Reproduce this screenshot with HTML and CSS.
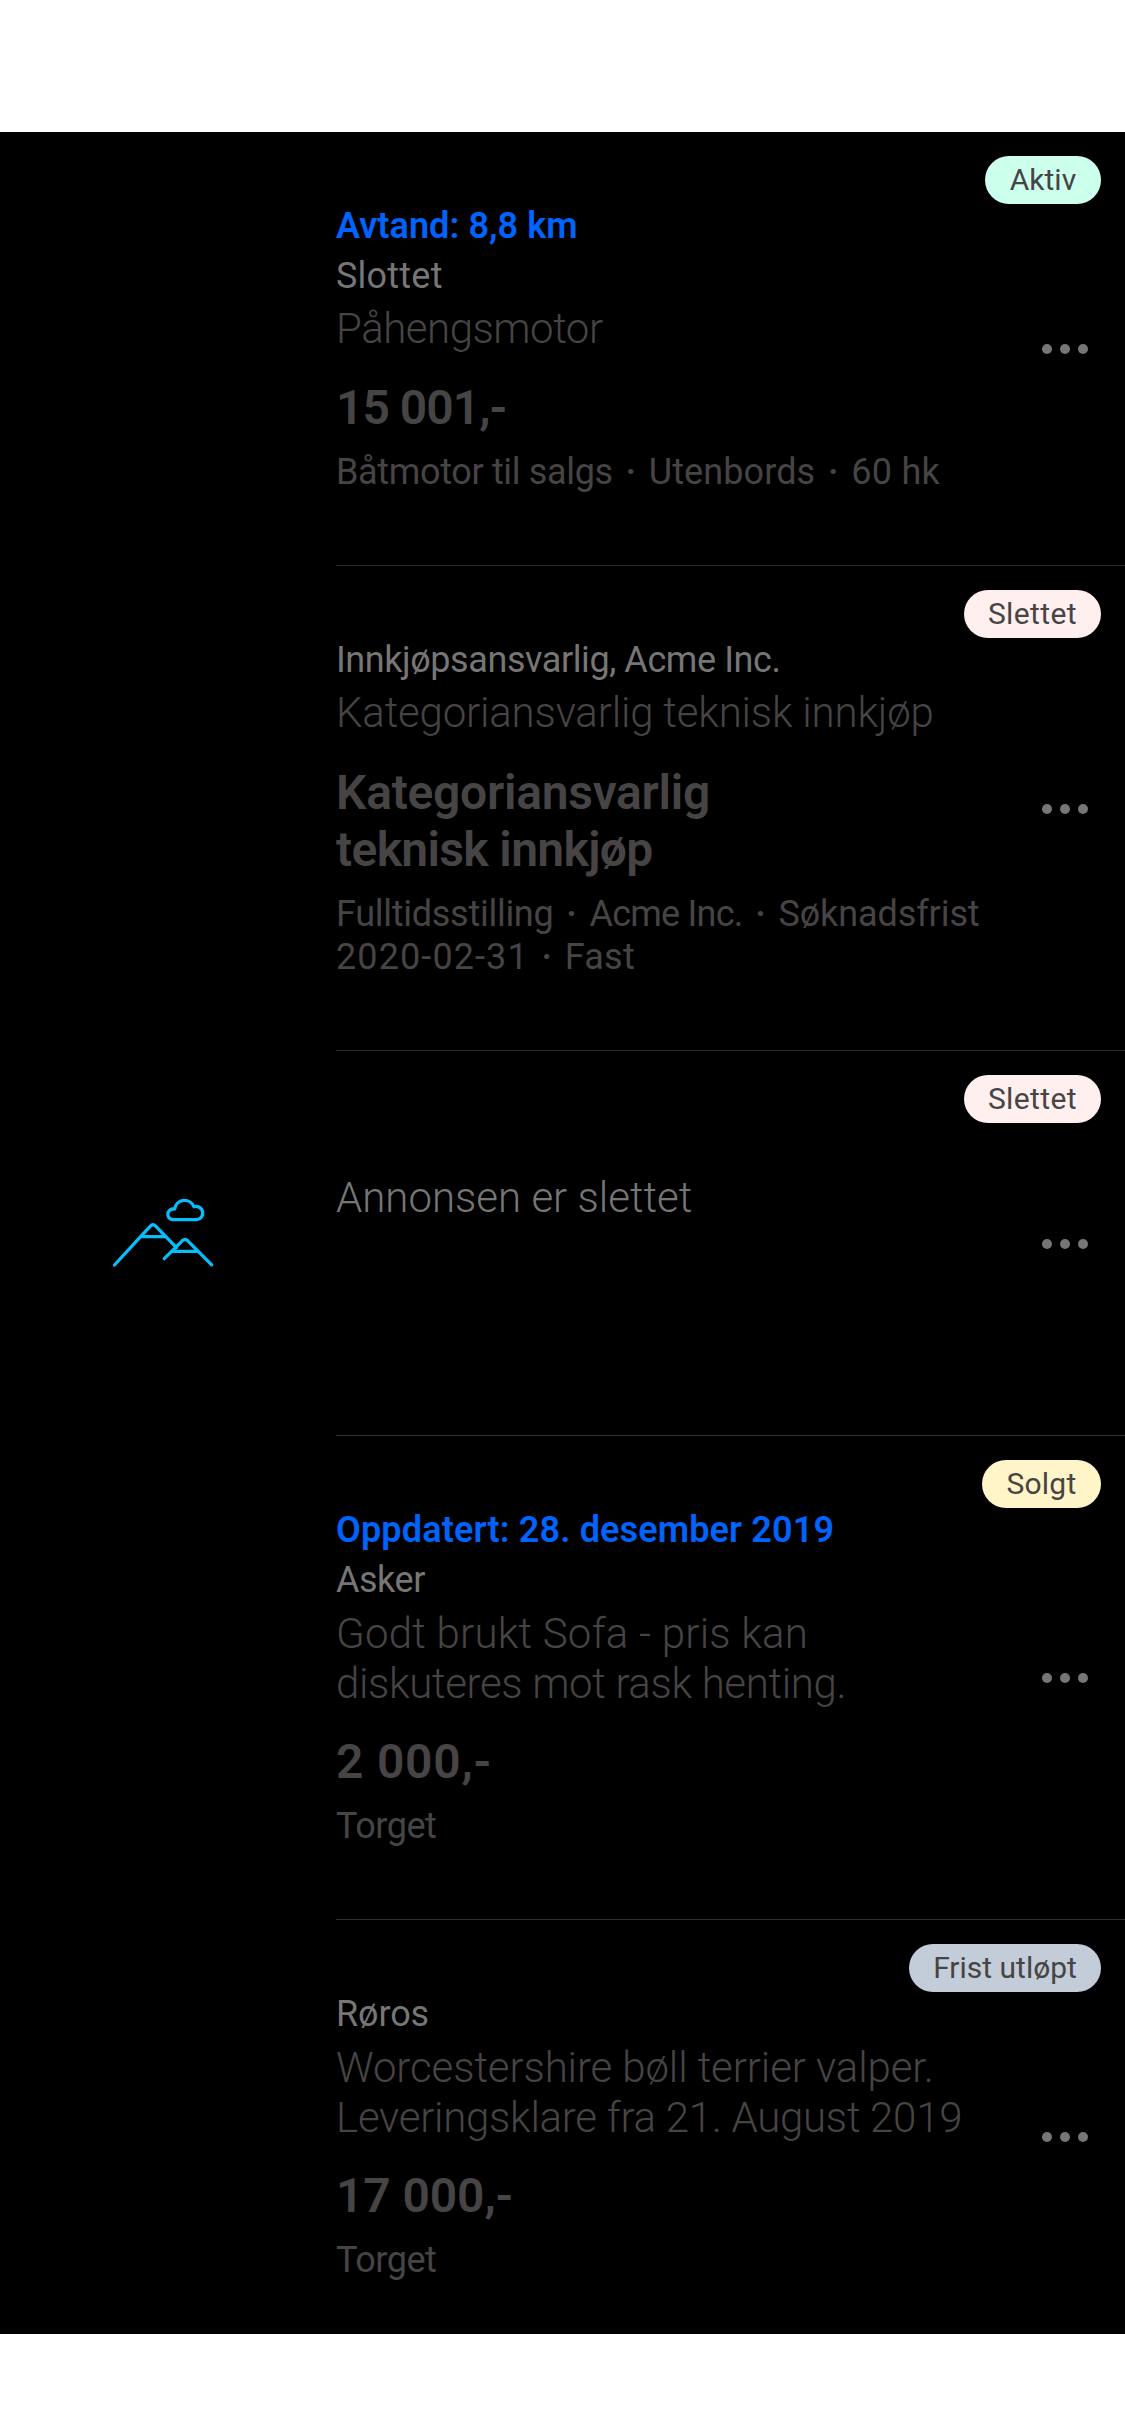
FILE: index.html
```
<!DOCTYPE html>
<html lang="nb">
<head>
<meta charset="utf-8">
<title>Favoritter</title>
<link rel="stylesheet" href="styles.css">
</head>
<body>
<svg class="sprite" width="0" height="0" aria-hidden="true">
  <symbol id="more" viewBox="0 0 48 12">
    <circle cx="6" cy="6" r="5"/><circle cx="24" cy="6" r="5"/><circle cx="42" cy="6" r="5"/>
  </symbol>
</svg>
<main class="list">
  <article class="item item--distance">
    <div class="media"></div>
    <div class="content">
      <div class="texts">
        <p class="status track-p05">Avtand: 8,8 km</p>
        <p class="place track-p20">Slottet</p>
        <h2 class="title track-n45">Påhengsmotor</h2>
        <p class="price track-n97">15 001,-</p>
        <p class="detail"><span class="track-n34">Båtmotor til salgs</span><span class="dot">·</span><span class="track-p10">Utenbords</span><span class="dot">·</span><span class="track-p20">60 hk</span></p>
      </div>
      <svg class="more"><use href="#more"/></svg>
      <span class="badge badge--active">Aktiv</span>
    </div>
  </article>

  <article class="item item--job">
    <div class="media"></div>
    <div class="content">
      <div class="texts">
        <p class="place track-n40">Innkjøpsansvarlig, Acme Inc.</p>
        <h2 class="title track-n18">Kategoriansvarlig teknisk innkjøp</h2>
        <p class="price"><span class="track-n27">Kategoriansvarlig</span><br><span class="track-n60">teknisk innkjøp</span></p>
        <p class="detail"><span class="track-n27">Fulltidsstilling</span><span class="dot">·</span><span class="track-n72">Acme Inc.</span><span class="dot">·</span><span class="track-n10">Søknadsfrist</span><br><span class="track-p110">2020-02-31</span><span class="dot">·</span><span class="track-p20">Fast</span></p>
      </div>
      <svg class="more"><use href="#more"/></svg>
      <span class="badge badge--deleted">Slettet</span>
    </div>
  </article>

  <article class="item item--removed">
    <div class="media">
      <svg class="mountains" viewBox="105 1190 120 84">
        <path d="M114.5 1265 150.3 1226.2Q153 1223.3 155.7 1226.2L176.5 1247.6M141.3 1236.7H165.7M164.3 1258.7 182.2 1240.8Q185 1238.2 187.8 1240.8L211.7 1264.8M171.7 1251.4H198.3M172.5 1219.7a5.4 5.4 0 0 1 0-10.7H174.7A10 10 0 0 1 193.9 1206.7A6.7 6.7 0 1 1 196.8 1219.7Z"/>
      </svg>
    </div>
    <div class="content">
      <div class="texts">
        <h2 class="title title--muted">Annonsen er slettet</h2>
      </div>
      <svg class="more"><use href="#more"/></svg>
      <span class="badge badge--deleted">Slettet</span>
    </div>
  </article>

  <article class="item item--wrapped">
    <div class="media"></div>
    <div class="content">
      <div class="texts">
        <p class="status track-p15">Oppdatert: 28. desember 2019</p>
        <p class="place track-n45">Asker</p>
        <h2 class="title"><span class="track-p20">Godt brukt Sofa - pris kan</span><br><span class="track-n34">diskuteres mot rask henting.</span></h2>
        <p class="price track-p70">2 000,-</p>
        <p class="detail track-n45">Torget</p>
      </div>
      <svg class="more"><use href="#more"/></svg>
      <span class="badge badge--sold">Solgt</span>
    </div>
  </article>

  <article class="item item--wrapped item--last">
    <div class="media"></div>
    <div class="content">
      <div class="texts">
        <p class="place track-n10">Røros</p>
        <h2 class="title"><span class="track-n10">Worcestershire bøll terrier valper.</span><br><span class="track-n27">Leveringsklare fra 21. August 2019</span></h2>
        <p class="price track-n10">17 000,-</p>
        <p class="detail track-n45">Torget</p>
      </div>
      <svg class="more"><use href="#more"/></svg>
      <span class="badge badge--expired">Frist utløpt</span>
    </div>
  </article>
</main>
</body>
</html>
```

FILE: styles.css
```
* { box-sizing: border-box; }

body {
  margin: 0;
  padding: 132px 0 102px;
  background: #fff;
  font-family: Roboto, "Liberation Sans", sans-serif;
  color: #474445;
}

p, h2 { margin: 0; font-weight: 400; white-space: nowrap; }

.sprite { display: block; }

.list {
  height: 2202px;
  overflow: hidden;
  background: #000;
}

/* Rows */
.item { display: flex; height: 434px; }
.item--job { height: 485px; }
.item--removed { height: 385px; }
.item--wrapped { height: 484px; }
.item--last { height: 434px; }

.media { flex: 0 0 336px; }

.content {
  position: relative;
  flex: 1;
  display: flex;
  align-items: center;
  justify-content: space-between;
  padding-right: 36px;
  border-bottom: 1px solid #2f2f2f;
}
.item--last .content { border-bottom: 0; }

.texts { align-self: flex-start; padding-top: 69px; }

/* Text styles */
.status, .place, .detail { font-size: 36px; line-height: 50px; }
.status { font-weight: 600; color: #0063fb; }
.place { color: #767676; }

.title {
  margin-top: 3px;
  font-size: 42px;
  font-weight: 300;
  line-height: 50px;
}
.title--muted { margin-top: 53px; color: #767676; }

.price {
  margin-top: 25px;
  font-size: 48px;
  font-weight: 600;
  line-height: 57px;
}

.detail { margin-top: 15px; line-height: 43px; }
.dot { display: inline-block; width: 36px; text-align: center; font-weight: 600; }

.item--job .price { margin-top: 26px; }
.item--wrapped .title { margin-top: 4px; }
.item--wrapped .price { margin-top: 24px; }

/* Letter spacing */
.track-n97 { letter-spacing: -0.97px; }
.track-n72 { letter-spacing: -0.76px; }
.track-n60 { letter-spacing: -0.65px; }
.track-n45 { letter-spacing: -0.47px; }
.track-n40 { letter-spacing: -0.42px; }
.track-n34 { letter-spacing: -0.34px; }
.track-n27 { letter-spacing: -0.27px; }
.track-n18 { letter-spacing: -0.18px; }
.track-n10 { letter-spacing: -0.1px; }
.track-p05 { letter-spacing: 0.08px; }
.track-p10 { letter-spacing: 0.1px; }
.track-p15 { letter-spacing: 0.15px; }
.track-p20 { letter-spacing: 0.23px; }
.track-p70 { letter-spacing: 0.77px; }
.track-p110 { letter-spacing: 1.1px; }

/* Status badge over the row's corner */
.badge {
  position: absolute;
  top: 24px;
  right: 24px;
  height: 48px;
  border-radius: 24px;
  font-size: 30px;
  line-height: 47px;
  text-align: center;
}
.badge--active { width: 116px; background: #ccffec; }
.badge--deleted { width: 137px; background: #ffefef; letter-spacing: 0.4px; }
.badge--sold { width: 119px; background: #fff5c8; letter-spacing: 0.2px; }
.badge--expired { width: 192px; background: #c3ccd9; }

/* Icons */
.more { width: 48px; height: 12px; fill: #767676; }
.item--job .more, .item--removed .more { margin-top: 2px; }

.mountains {
  display: block;
  width: 120px;
  height: 84px;
  margin: 139px 0 0 105px;
  fill: none;
  stroke: #06befb;
  stroke-width: 3.3;
  stroke-linecap: round;
  stroke-linejoin: round;
}
```
